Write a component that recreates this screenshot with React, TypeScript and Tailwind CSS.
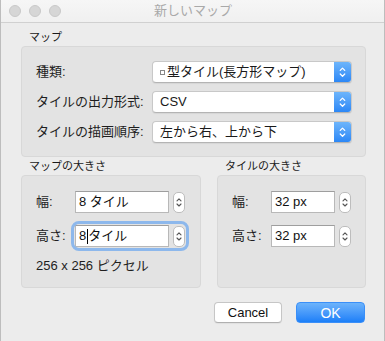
import React from "react";

const FONT = { fontFamily: '"Liberation Sans", "Noto Sans CJK JP", sans-serif' };

// up/down chevrons used in popups and steppers
const Chevrons = ({ color, size }: { color: string; size: number }) => (
  <svg width={size} height={size * 1.6} viewBox="0 0 10 16" fill="none">
    <path d="M2.5 6 L5 3.5 L7.5 6" stroke={color} strokeWidth="1.4" strokeLinecap="round" strokeLinejoin="round" />
    <path d="M2.5 10 L5 12.5 L7.5 10" stroke={color} strokeWidth="1.4" strokeLinecap="round" strokeLinejoin="round" />
  </svg>
);

const Popup = ({ children }: { children: React.ReactNode }) => (
  <div className="flex h-[22px] w-[200px] overflow-hidden rounded-[4px] border border-[#c8c8c8] border-b-[#b4b4b4] bg-white shadow-[0_1px_1px_rgba(0,0,0,0.06)]">
    <div className="flex flex-1 items-center pl-[7px] text-[13px] text-[#1a1a1a]">{children}</div>
    <div className="flex w-[17px] items-center justify-center bg-gradient-to-b from-[#6db5fb] to-[#2b87f6]">
      <Chevrons color="#ffffff" size={9} />
    </div>
  </div>
);

const Stepper = () => (
  <div className="flex h-[21px] w-[12px] items-center justify-center rounded-[5px] border border-[#bdbdbd] bg-white">
    <Chevrons color="#555555" size={8} />
  </div>
);

const Field = ({ value, width, cursor }: { value: string; width: string; cursor?: boolean }) => (
  <div className={`flex h-[22px] items-center border border-[#b8b8b8] border-t-[#9e9e9e] bg-white pl-[3px] text-[13px] text-[#111] ${width}`}>
    {cursor ? (
      <>
        <span>8</span>
        <span className="mx-[0.5px] inline-block h-[15px] w-px bg-black" />
        <span>タイル</span>
      </>
    ) : (
      value
    )}
  </div>
);

const App = () => {
  const popupRows = [
    {
      label: "種類:",
      value: (
        <>
          <span className="mr-[2px] inline-block h-[5px] w-[5px] border border-[#888]" />
          型タイル(長方形マップ)
        </>
      ),
    },
    { label: "タイルの出力形式:", value: "CSV" },
    { label: "タイルの描画順序:", value: "左から右、上から下" },
  ];

  return (
    <div className="h-[341px] w-[385px] overflow-hidden border-x border-[#bdbdbd] bg-[#ececec]" style={FONT}>
      {/* title bar */}
      <div className="relative flex h-[23px] items-center border-b border-[#d0d0d0] bg-gradient-to-b from-[#f6f6f6] to-[#f0f0f0]">
        <div className="flex gap-[8px] pl-[8px]">
          <div className="h-[12px] w-[12px] rounded-full border border-[#c9c9c9] bg-[#d6d6d6]" />
          <div className="h-[12px] w-[12px] rounded-full border border-[#c9c9c9] bg-[#d6d6d6]" />
          <div className="h-[12px] w-[12px] rounded-full border border-[#c9c9c9] bg-[#d6d6d6]" />
        </div>
        <div className="absolute inset-0 flex items-center justify-center pl-[1px] text-[13px] text-[#a9a9a9]">新しいマップ</div>
      </div>

      <div className="pl-[20px] pr-[18px]">
        {/* map group */}
        <div className="h-[23px] pl-[8px] pt-[7px] text-[11px] leading-[14px] text-[#1a1a1a]">マップ</div>
        <div className="flex h-[111px] flex-col gap-[8px] rounded-[4px] border border-[#d8d8d8] bg-[#e3e3e3] pl-[14px] pt-[14px]">
          {popupRows.map((row, i) => (
            <div key={i} className="flex items-center">
              <div className="w-[116px] text-[13px] text-[#1e1e1e]">{row.label}</div>
              <Popup>{row.value}</Popup>
            </div>
          ))}
        </div>

        {/* size groups */}
        <div className="flex gap-[16px]">
          <div className="w-[181px]">
            <div className="h-[18px] pl-[8px] pt-[2px] text-[11px] leading-[14px] text-[#1a1a1a]">マップの大きさ</div>
            <div className="h-[113px] rounded-[4px] border border-[#d8d8d8] bg-[#e3e3e3] pl-[14px] pt-[15px]">
              <div className="flex items-center">
                <div className="w-[39px] text-[13px] text-[#1e1e1e]">幅:</div>
                <Field value="8 タイル" width="w-[94px]" />
                <div className="ml-[4px]">
                  <Stepper />
                </div>
              </div>
              <div className="mt-[12px] flex items-center">
                <div className="w-[39px] text-[13px] text-[#1e1e1e]">高さ:</div>
                <div className="flex items-center gap-[4px] rounded-[4px] outline-[3px] outline-offset-[1px] outline-[#8db8ec] outline-solid">
                  <Field value="8 タイル" width="w-[94px]" cursor />
                  <Stepper />
                </div>
              </div>
              <div className="mt-[12px] text-[13px] leading-[14px] text-[#1e1e1e]">256 x 256 ピクセル</div>
            </div>
          </div>

          <div className="w-[150px]">
            <div className="h-[18px] pl-[8px] pt-[2px] text-[11px] leading-[14px] text-[#1a1a1a]">タイルの大きさ</div>
            <div className="h-[113px] rounded-[4px] border border-[#d8d8d8] bg-[#e3e3e3] pl-[14px] pt-[15px]">
              <div className="flex items-center">
                <div className="w-[39px] text-[13px] text-[#1e1e1e]">幅:</div>
                <Field value="32 px" width="w-[64px]" />
                <div className="ml-[4px]">
                  <Stepper />
                </div>
              </div>
              <div className="mt-[12px] flex items-center">
                <div className="w-[39px] text-[13px] text-[#1e1e1e]">高さ:</div>
                <Field value="32 px" width="w-[64px]" />
                <div className="ml-[4px]">
                  <Stepper />
                </div>
              </div>
            </div>
          </div>
        </div>

        {/* buttons */}
        <div className="mt-[14px] flex justify-end gap-[14px] pr-[1px]">
          <button className="h-[21px] w-[68px] rounded-[4px] border border-[#c6c6c6] border-b-[#b0b0b0] bg-white text-[13px] text-[#111] shadow-[0_1px_1px_rgba(0,0,0,0.05)]">
            Cancel
          </button>
          <button className="h-[21px] w-[69px] rounded-[4px] border border-[#3a8ff8] bg-gradient-to-b from-[#6cb3fb] to-[#1b7ff8] text-[14px] text-white">
            OK
          </button>
        </div>
      </div>
    </div>
  );
};

export default App;
